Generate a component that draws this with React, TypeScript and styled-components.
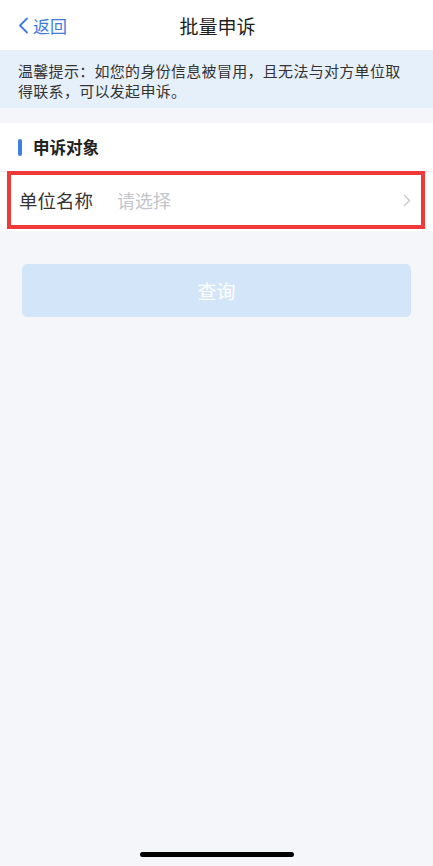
import React from "react";
import styled, { createGlobalStyle } from "styled-components";

const GlobalStyle = createGlobalStyle`
  html, body {
    margin: 0;
    padding: 0;
    background: #f5f6fa;
  }
  body {
    font-family: "Noto Sans CJK SC", "Noto Sans", sans-serif;
  }
`;

const Page = styled.div`
  min-height: 100vh;
  display: flex;
  flex-direction: column;
  background: #f5f6fa;
`;

const NavBar = styled.div`
  height: 50px;
  background: #ffffff;
  display: grid;
  grid-template-columns: 1fr auto 1fr;
  align-items: center;
  padding: 0 16px 0 18px;
`;

const BackButton = styled.div`
  display: flex;
  align-items: center;
  gap: 4px;
  color: #3f7ae0;
  font-size: 17px;
  line-height: 1;
  cursor: pointer;
`;

const Title = styled.div`
  font-size: 19px;
  color: #1e1e1e;
  line-height: 1;
`;

const Tip = styled.div`
  background: #e6f0fb;
  color: #333333;
  font-size: 15px;
  letter-spacing: 0.3px;
  line-height: 20px;
  padding: 11px 20px 7px 18px;
`;

const Section = styled.div`
  margin-top: 15px;
  background: #ffffff;
`;

const SectionHeader = styled.div`
  height: 48px;
  display: flex;
  align-items: center;
  gap: 11px;
  padding-left: 18px;
  border-bottom: 1px solid #eceef2;
`;

const Marker = styled.span`
  width: 4px;
  height: 17px;
  border-radius: 2px;
  background: #3d7fe3;
`;

const SectionTitle = styled.span`
  font-size: 16.5px;
  font-weight: 700;
  color: #222222;
`;

const RowWrap = styled.div`
  padding: 0 8px 2px 7px;
`;

const Row = styled.div<{ $highlight?: boolean }>`
  height: 50px;
  display: flex;
  align-items: center;
  padding: 0 10px 0 8px;
  border: 4px solid ${(p) => (p.$highlight ? "#f03a3a" : "transparent")};
  margin-top: -1px;
`;

const Label = styled.span`
  font-size: 18.5px;
  color: #333333;
  width: 98px;
`;

const Placeholder = styled.span`
  flex: 1;
  font-size: 18px;
  color: #c2c5cc;
`;

const ButtonArea = styled.div`
  padding: 33px 22px 0 22px;
`;

const QueryButton = styled.button<{ $disabled?: boolean }>`
  width: 100%;
  height: 53px;
  border: none;
  border-radius: 5px;
  background: ${(p) => (p.$disabled ? "#d3e5f8" : "#3d7fe3")};
  color: #ffffff;
  font-family: "Noto Sans CJK SC", "Noto Sans", sans-serif;
  font-size: 19px;
`;

const HomeIndicator = styled.div`
  margin: auto auto 9px;
  width: 154px;
  height: 5px;
  border-radius: 3px;
  background: #000000;
`;

function BackChevron() {
  return (
    <svg width="11" height="17" viewBox="0 0 11 17">
      <path d="M9 1.5 L2 8.5 L9 15.5" fill="none" stroke="#3f7ae0" strokeWidth="1.8" strokeLinecap="round" strokeLinejoin="round" />
    </svg>
  );
}

function RightChevron() {
  return (
    <svg width="8" height="13" viewBox="0 0 8 13">
      <path d="M1.5 1.5 L6.5 6.5 L1.5 11.5" fill="none" stroke="#c4c7cd" strokeWidth="1.4" strokeLinecap="round" strokeLinejoin="round" />
    </svg>
  );
}

export default function App() {
  return (
    <Page>
      <GlobalStyle />
      <NavBar>
        <BackButton>
          <BackChevron />
          返回
        </BackButton>
        <Title>批量申诉</Title>
        <span />
      </NavBar>
      <Tip>温馨提示：如您的身份信息被冒用，且无法与对方单位取得联系，可以发起申诉。</Tip>
      <Section>
        <SectionHeader>
          <Marker />
          <SectionTitle>申诉对象</SectionTitle>
        </SectionHeader>
        <RowWrap>
          <Row $highlight>
            <Label>单位名称</Label>
            <Placeholder>请选择</Placeholder>
            <RightChevron />
          </Row>
        </RowWrap>
      </Section>
      <ButtonArea>
        <QueryButton $disabled>查询</QueryButton>
      </ButtonArea>
      <HomeIndicator />
    </Page>
  );
}
